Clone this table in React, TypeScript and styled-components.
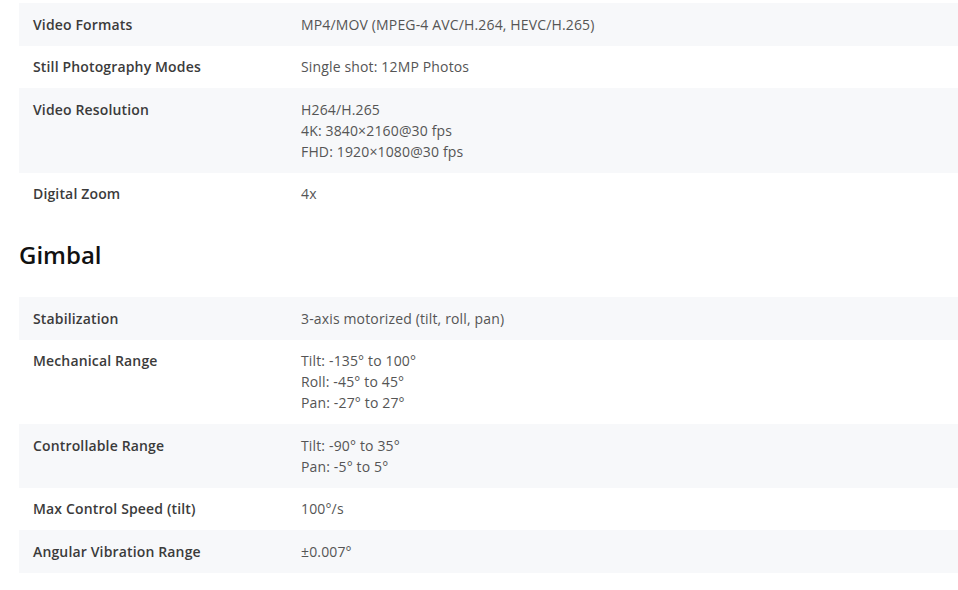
import React from 'react';
import styled, { createGlobalStyle } from 'styled-components';

interface Spec {
  label: string;
  values: string[];
}

const camera: Spec[] = [
  { label: 'Video Formats', values: ['MP4/MOV (MPEG-4 AVC/H.264, HEVC/H.265)'] },
  { label: 'Still Photography Modes', values: ['Single shot: 12MP Photos'] },
  {
    label: 'Video Resolution',
    values: ['H264/H.265', '4K: 3840×2160@30 fps', 'FHD: 1920×1080@30 fps'],
  },
  { label: 'Digital Zoom', values: ['4x'] },
];

const gimbal: Spec[] = [
  { label: 'Stabilization', values: ['3-axis motorized (tilt, roll, pan)'] },
  {
    label: 'Mechanical Range',
    values: ['Tilt: -135° to 100°', 'Roll: -45° to 45°', 'Pan: -27° to 27°'],
  },
  { label: 'Controllable Range', values: ['Tilt: -90° to 35°', 'Pan: -5° to 5°'] },
  { label: 'Max Control Speed (tilt)', values: ['100°/s'] },
  { label: 'Angular Vibration Range', values: ['±0.007°'] },
];

const SpecTable = ({ rows }: { rows: Spec[] }) => (
  <Table>
    {rows.map((row, i) => (
      <Row key={row.label} $striped={i % 2 === 0}>
        <Label>{row.label}</Label>
        <Value>
          {row.values.map((v) => (
            <div key={v}>{v}</div>
          ))}
        </Value>
      </Row>
    ))}
  </Table>
);

export default function App() {
  return (
    <>
      <GlobalStyle />
      <Page>
        <SpecTable rows={camera} />
        <Heading>Gimbal</Heading>
        <SpecTable rows={gimbal} />
      </Page>
    </>
  );
}

const GlobalStyle = createGlobalStyle`
  body {
    margin: 0;
    background: #fff;
    font-family: "Open Sans", "Liberation Sans", sans-serif;
  }
`;

const Page = styled.div`
  padding: 3px 0 0 19px;
`;

const Table = styled.div`
  display: flex;
  flex-direction: column;
`;

const Row = styled.div<{ $striped: boolean }>`
  display: grid;
  grid-template-columns: 268px 1fr;
  background: ${(p) => (p.$striped ? '#f7f8fa' : '#fff')};
  font-size: 14px;
  line-height: 21px;
  letter-spacing: 0.15px;
`;

const Label = styled.div`
  padding: 10.75px 14px;
  font-weight: 600;
  color: #3b3b3b;
`;

const Value = styled.div`
  padding: 10.75px 14px;
  color: #555;
`;

const Heading = styled.h2`
  margin: 22px 0 24px;
  font-size: 24px;
  line-height: 36px;
  font-weight: 600;
  color: #111;
`;
